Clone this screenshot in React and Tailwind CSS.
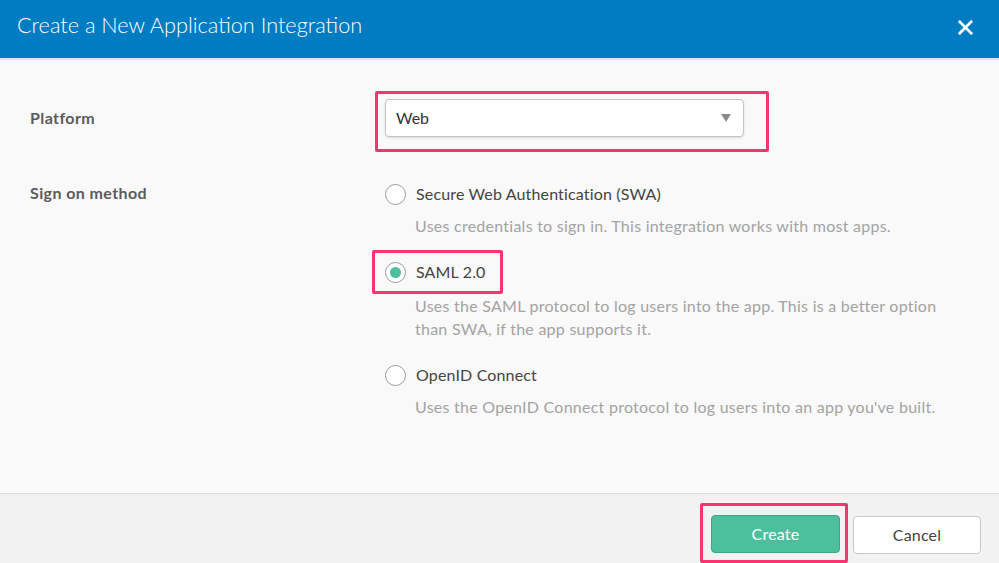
import React, { useState } from 'react';

const options = [
  {
    id: 'swa',
    label: 'Secure Web Authentication (SWA)',
    desc: ['Uses credentials to sign in. This integration works with most apps.'],
  },
  {
    id: 'saml',
    label: 'SAML 2.0',
    desc: ['Uses the SAML protocol to log users into the app. This is a better option', 'than SWA, if the app supports it.'],
  },
  {
    id: 'oidc',
    label: 'OpenID Connect',
    desc: ["Uses the OpenID Connect protocol to log users into an app you've built."],
  },
];

const Radio = ({ checked }) => (
  <span className="w-[21px] h-[21px] rounded-full border border-[#9a9a9a] bg-white flex items-center justify-center shrink-0">
    {checked && <span className="w-[11px] h-[11px] rounded-full bg-[#4cbf9c]" />}
  </span>
);

const App = () => {
  const [method, setMethod] = useState('saml');

  return (
    <div className="w-[999px] h-[563px] flex flex-col bg-[#f9f9f9] font-['Lato',sans-serif] overflow-hidden">
      {/* Header */}
      <div className="h-[60px] bg-[#007cc2] border-b-2 border-[#d6e6f2] flex items-center justify-between pl-[17px] pr-[26px] shrink-0">
        <h1 className="text-white text-[21.7px] font-light -mt-[8px]">Create a New Application Integration</h1>
        <svg className="w-[15px] h-[15px] -mt-[4px]" viewBox="0 0 16 16" fill="none" stroke="white" strokeWidth="3" strokeLinecap="square">
          <path d="M2 2 L14 14 M14 2 L2 14" />
        </svg>
      </div>

      {/* Body */}
      <div className="flex-1 px-[30px]">
        <div className="flex items-start mt-[31px]">
          <div className="w-[345px] text-[16px] tracking-[0.4px] font-bold text-[#5b5b5b] mt-[15px]">Platform</div>
          <div className="border-[3px] border-[#fb3370] rounded-[2px] w-[394px] h-[61px] pl-[7px] pt-[5px]">
            <div className="w-[359px] h-[38px] bg-white border border-[#c4c4c4] rounded-[4px] shadow-sm flex items-center justify-between pl-[10px] pr-[12px]">
              <span className="text-[16px] text-[#333]">Web</span>
              <svg className="w-[10px] h-[8px]" viewBox="0 0 10 8" fill="#8a8a8a"><path d="M0 0 H10 L5 8 Z" /></svg>
            </div>
          </div>
        </div>

        <div className="flex mt-[31px]">
          <div className="w-[355px] text-[16px] tracking-[0.4px] font-bold text-[#5b5b5b] -mt-[2px]">Sign on method</div>
          <div className="flex flex-col">
            {options.map((o) => (
              <div key={o.id} className="mb-[24px]">
                <div
                  onClick={() => setMethod(o.id)}
                  className={`flex items-center gap-[10px] cursor-pointer ${
                    o.id === 'saml'
                      ? 'border-[3px] border-[#fb3370] rounded-[2px] w-[131px] h-[44px] -ml-[13px] pl-[10px] -mt-[11px] -mb-[9px]'
                      : 'h-[22px]'
                  }`}
                >
                  <Radio checked={method === o.id} />
                  <span className="text-[16px] tracking-[0.15px] text-[#444]">{o.label}</span>
                </div>
                <div className="mt-[9px] pl-[30px] text-[16px] tracking-[0.25px] text-[#a3a3a3] leading-[23px]">
                  {o.desc.map((d) => (
                    <div key={d}>{d}</div>
                  ))}
                </div>
              </div>
            ))}
          </div>
        </div>
      </div>

      {/* Footer */}
      <div className="h-[70px] bg-[#f2f2f2] border-t border-[#dcdcdc] flex justify-end items-end pr-[18px] shrink-0">
        <div className="border-[3px] border-[#fb3370] rounded-[2px] w-[148px] h-[60px] flex pl-[8px] pt-[9px]">
          <button className="w-[129px] h-[38px] bg-[#4cbf9c] border border-[#3ba785] rounded-[4px] text-white text-[16px] tracking-[0.2px]">Create</button>
        </div>
        <button className="ml-[5px] mb-[9px] w-[128px] h-[38px] bg-white border border-[#c8c8c8] rounded-[4px] text-[#444] text-[16px] tracking-[0.2px]">Cancel</button>
      </div>
    </div>
  );
};

export default App;
